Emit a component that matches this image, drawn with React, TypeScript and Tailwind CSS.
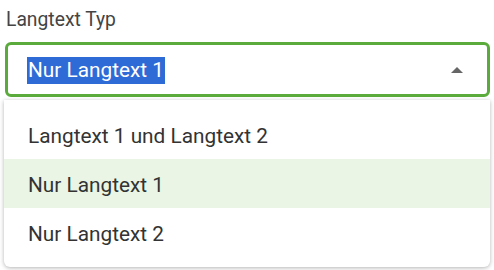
export default function App() {
	const options = ['Langtext 1 und Langtext 2', 'Nur Langtext 1', 'Nur Langtext 2'];
	const selected = 'Nur Langtext 1';

	return (
		<div className="w-[494px] h-[270px] bg-white font-['Roboto',sans-serif] overflow-hidden">
			<div className="pl-[6px] pt-[8px] h-[42px] text-[19.3px] leading-[24px] text-[#444]">Langtext Typ</div>
			<div className="mx-[5px] w-[485px] h-[55px] border-[3px] border-[#5aab3b] rounded-[6px] flex items-center pl-[19px] pr-[24px]">
				<span className="bg-[#2e6bd6] text-white text-[20.8px] leading-[27px] px-[1px] mt-[1px]">{selected}</span>
				<div className="ml-auto w-0 h-0 border-l-[6px] border-r-[6px] border-b-[6px] border-l-transparent border-r-transparent border-b-[#666]"></div>
			</div>
			<div className="mt-[3px] ml-[4px] w-[486px] bg-white rounded-b-[6px] shadow-[0_1px_4px_rgba(0,0,0,0.3)] py-[10px]">
				{options.map((opt) => (
					<div
						key={opt}
						className={`h-[49px] flex items-center pl-[24px] pt-[4px] text-[20.8px] text-[#333] ${opt === selected ? 'bg-[#eaf5e5]' : ''}`}
					>
						{opt}
					</div>
				))}
			</div>
		</div>
	);
}
